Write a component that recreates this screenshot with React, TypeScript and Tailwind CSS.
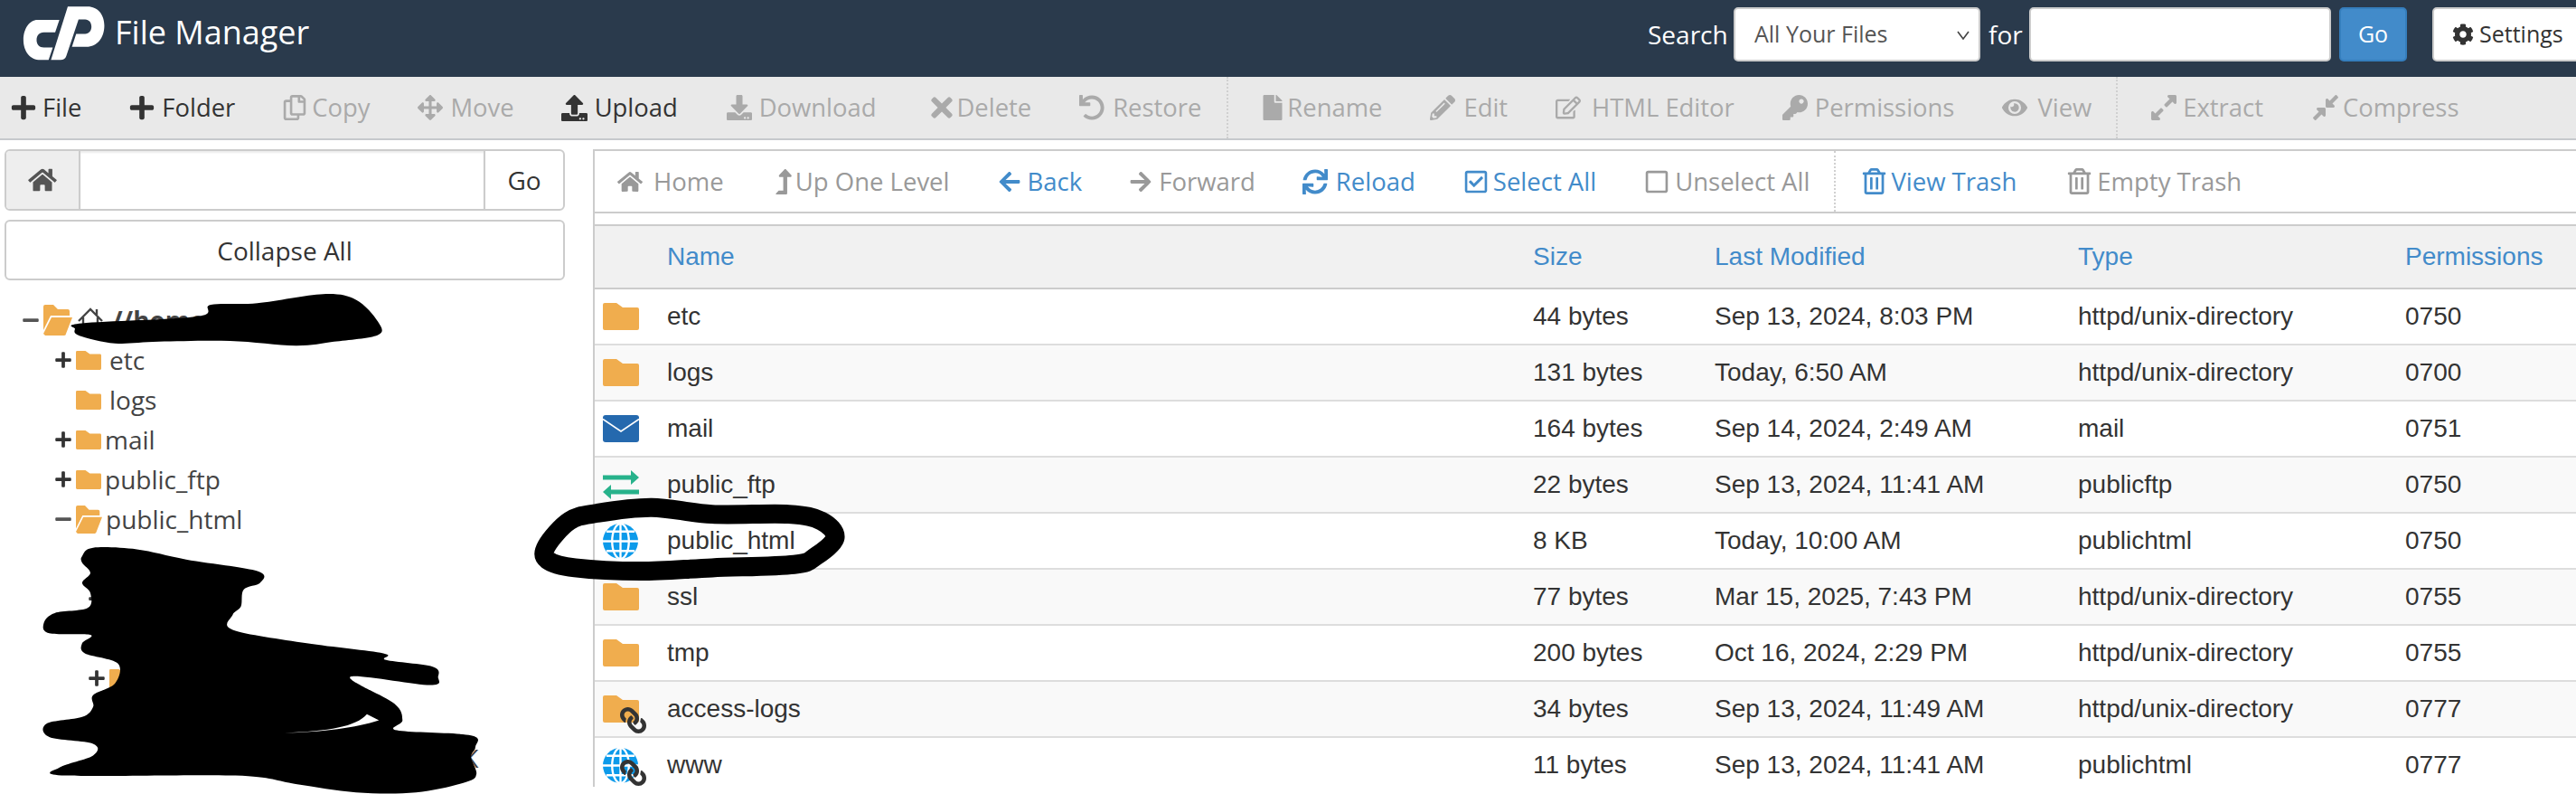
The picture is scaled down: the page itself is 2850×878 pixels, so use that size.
import React from "react";
import {
  FaRegCopy, FaArrowsAlt, FaUpload, FaDownload, FaTimes, FaUndo, FaFile, FaPencilAlt, FaRegEdit, FaKey, FaEye,
  FaExpandAlt, FaCompressAlt, FaHome, FaLevelUpAlt, FaArrowLeft, FaArrowRight, FaSync, FaRegCheckSquare, FaRegSquare,
  FaRegTrashAlt, FaCog, FaLink, FaPlus, FaMinus,
} from "react-icons/fa";

const smooth = (p: number[][]) => {
  const n = p.length;
  let d = `M${p[0][0]} ${p[0][1]}`;
  for (let i = 0; i < n; i++) {
    const a = p[(i - 1 + n) % n], b = p[i], c = p[(i + 1) % n], e = p[(i + 2) % n];
    d += ` C${b[0] + (c[0] - a[0]) / 6} ${b[1] + (c[1] - a[1]) / 6} ${c[0] - (e[0] - b[0]) / 6} ${c[1] - (e[1] - b[1]) / 6} ${c[0]} ${c[1]}`;
  }
  return d + "Z";
};

const blobTop = [[137,172],[150,155],[360,135],[385,100],[470,95],[590,68],[650,85],[690,150],[690,190],[610,210],[540,222],[420,208],[290,210],[210,215],[145,192]];
const blobLow = [[150,850],[170,825],[250,830],[340,860],[470,895],[475,930],[445,950],[440,1000],[425,1025],[425,1070],[560,1110],[700,1140],[705,1160],[790,1180],[800,1210],[785,1235],[640,1210],[720,1290],[735,1340],[725,1370],[860,1385],[868,1420],[860,1450],[870,1500],[850,1525],[760,1555],[650,1555],[540,1530],[430,1505],[120,1505],[110,1480],[170,1445],[170,1410],[90,1390],[85,1350],[150,1330],[170,1300],[170,1265],[210,1230],[215,1170],[155,1140],[150,1110],[165,1085],[90,1080],[80,1050],[100,1020],[160,1005],[165,960],[150,930],[165,900],[150,870]];
const loop = [[998,820],[1040,745],[1090,722],[1190,705],[1300,725],[1440,725],[1500,745],[1525,795],[1490,850],[1450,875],[1300,885],[1170,895],[1050,885],[1000,862]];

const Scribbles = () => (
  <svg viewBox="0 0 1568 1560" preserveAspectRatio="none" className="absolute left-0 top-[300px] w-[950px] h-[578px] pointer-events-none">
    <path d={smooth(blobTop)} fill="#000" />
    <path d={smooth(blobLow)} fill="#000" />
    <path d="M520 1378 C600 1372 650 1360 670 1322 L692 1340 C650 1362 590 1375 520 1378Z" fill="#fff" />
    <path d={smooth(loop)} fill="none" stroke="#000" strokeWidth="21" vectorEffect="non-scaling-stroke" />
  </svg>
);

const Logo = () => (
  <svg viewBox="70 15 285 190" className="w-[95px] h-[63px]" fill="#fff">
    <path d="M125 66 L198 66 L184 108 L146 108 C130 108 122 120 122 133 C122 147 131 158 146 158 L176 158 L162 200 L135 200 C100 200 78 170 78 133 C78 96 98 66 125 66Z" />
    <path d="M226 22 L292 22 C327 22 348 50 348 85 C348 125 325 156 288 156 L240 156 L254 113 L284 113 C297 113 305 102 305 89 C305 76 297 65 284 65 L262 65 L221 187 C218 196 211 200 202 200 L170 200Z" />
  </svg>
);

const Folder = ({ className }: { className: string }) => (
  <svg viewBox="0 0 40 30" className={className} fill="#f0ad4e">
    <path d="M2 0H15L22 5H38a2 2 0 0 1 2 2V28a2 2 0 0 1-2 2H2a2 2 0 0 1-2-2V2a2 2 0 0 1 2-2Z" />
  </svg>
);
const FolderOpen = ({ className }: { className: string }) => (
  <svg viewBox="0 0 32 34" className={className} fill="#f0ad4e">
    <path d="M0 2a2 2 0 0 1 2-2H11L16 5H27a2 2 0 0 1 2 2V12H8L0 28Z" />
    <path d="M9 14H32L25 32a2 2 0 0 1-2 2H2L0 32Z" />
  </svg>
);
const Mail = () => (
  <svg viewBox="0 0 40 30" className="w-[40px] h-[30px]">
    <rect width="40" height="30" rx="3" fill="#2569ae" />
    <path d="M0 4.5L20 18L40 4.5" fill="none" stroke="#fff" strokeWidth="1.6" />
  </svg>
);
const Ftp = () => (
  <svg viewBox="0 0 40 32" className="w-[40px] h-[32px]" fill="#27b28b">
    <path d="M0 5.5H31V0L40 8L31 16V10.5H0Z" />
    <path d="M40 21.5H9V16L0 24L9 32V26.5H40Z" />
  </svg>
);
const Globe = () => (
  <svg viewBox="0 0 40 40" className="w-[39px] h-[39px]">
    <circle cx="20" cy="20" r="20" fill="#0c9aea" />
    <g fill="none" stroke="#fff" strokeWidth="2.4">
      <ellipse cx="20" cy="20" rx="9.5" ry="20" />
      <path d="M20 0V40M0 20H40M4 9H36M4 31H36" />
    </g>
  </svg>
);
const HomeOutline = () => (
  <svg viewBox="0 0 30 30" className="w-[30px] h-[30px] shrink-0" fill="none" stroke="#444" strokeWidth="2.4">
    <path d="M2 16L15 3L28 16M7 12V28H23V12M22 9V3" />
  </svg>
);

type Tool = { label: string; Icon: any; slot: string; ml: string; icon?: string };

const Item = ({ t, tone }: { t: Tool; tone: string }) => (
  <div className={`flex items-center shrink-0 ${t.ml} ${tone}`}>
    <span className={`flex items-center ${t.slot}`}>
      <t.Icon className={`${t.icon ?? "h-[28px]"} w-auto`} />
    </span>
    <span className="whitespace-nowrap">{t.label}</span>
  </div>
);

const Sep = ({ ml }: { ml: string }) => (
  <div className={`self-stretch border-l-2 border-dotted border-[#d0d0d0] shrink-0 ${ml}`} />
);

const mainTools: (Tool & { on?: boolean })[] = [
  { label: "File", Icon: FaPlus, slot: "w-[36px]", ml: "ml-[11px]", on: true, icon: "h-[30px]" },
  { label: "Folder", Icon: FaPlus, slot: "w-[37px]", ml: "ml-[52px]", on: true, icon: "h-[30px]" },
  { label: "Copy", Icon: FaRegCopy, slot: "w-[33px]", ml: "ml-[52px]" },
  { label: "Move", Icon: FaArrowsAlt, slot: "w-[36px]", ml: "ml-[53px]" },
  { label: "Upload", Icon: FaUpload, slot: "w-[37px]", ml: "ml-[52px]", on: true, icon: "h-[29px]" },
  { label: "Download", Icon: FaDownload, slot: "w-[36px]", ml: "ml-[54px]" },
  { label: "Delete", Icon: FaTimes, slot: "w-[34px]", ml: "ml-[55px]", icon: "h-[34px]" },
  { label: "Restore", Icon: FaUndo, slot: "w-[37px]", ml: "ml-[53px]" },
];
const midTools: Tool[] = [
  { label: "Rename", Icon: FaFile, slot: "w-[30px]", ml: "ml-[35px]" },
  { label: "Edit", Icon: FaPencilAlt, slot: "w-[37px]", ml: "ml-[53px]" },
  { label: "HTML Editor", Icon: FaRegEdit, slot: "w-[40px]", ml: "ml-[53px]" },
  { label: "Permissions", Icon: FaKey, slot: "w-[36px]", ml: "ml-[53px]" },
  { label: "View", Icon: FaEye, slot: "w-[39px]", ml: "ml-[53px]" },
];
const endTools: Tool[] = [
  { label: "Extract", Icon: FaExpandAlt, slot: "w-[37px]", ml: "ml-[35px]", icon: "h-[32px]" },
  { label: "Compress", Icon: FaCompressAlt, slot: "w-[35px]", ml: "ml-[53px]", icon: "h-[32px]" },
];

const GRAY = "text-[#999]";
const BLUE = "text-[#428bca]";
const navTools: (Tool & { tone: string })[] = [
  { label: "Home", Icon: FaHome, slot: "w-[40px]", ml: "ml-[25px]", tone: GRAY, icon: "h-[28px]" },
  { label: "Up One Level", Icon: FaLevelUpAlt, slot: "w-[26px]", ml: "ml-[53px]", tone: GRAY, icon: "h-[28px]" },
  { label: "Back", Icon: FaArrowLeft, slot: "w-[33px]", ml: "ml-[53px]", tone: BLUE, icon: "h-[26px]" },
  { label: "Forward", Icon: FaArrowRight, slot: "w-[33px]", ml: "ml-[52px]", tone: GRAY, icon: "h-[26px]" },
  { label: "Reload", Icon: FaSync, slot: "w-[37px]", ml: "ml-[52px]", tone: BLUE },
  { label: "Select All", Icon: FaRegCheckSquare, slot: "w-[33px]", ml: "ml-[53px]", tone: BLUE },
  { label: "Unselect All", Icon: FaRegSquare, slot: "w-[34px]", ml: "ml-[53px]", tone: GRAY },
];
const navEnd: (Tool & { tone: string })[] = [
  { label: "View Trash", Icon: FaRegTrashAlt, slot: "w-[33px]", ml: "ml-[28px]", tone: BLUE, icon: "h-[29px]" },
  { label: "Empty Trash", Icon: FaRegTrashAlt, slot: "w-[34px]", ml: "ml-[55px]", tone: GRAY, icon: "h-[29px]" },
];

const cols = "grid grid-cols-[80px_958px_201px_402px_362px_1fr] items-center";
const rows = [
  { k: "folder", n: "etc", s: "44 bytes", d: "Sep 13, 2024, 8:03 PM", t: "httpd/unix-directory", p: "0750" },
  { k: "folder", n: "logs", s: "131 bytes", d: "Today, 6:50 AM", t: "httpd/unix-directory", p: "0700" },
  { k: "mail", n: "mail", s: "164 bytes", d: "Sep 14, 2024, 2:49 AM", t: "mail", p: "0751" },
  { k: "ftp", n: "public_ftp", s: "22 bytes", d: "Sep 13, 2024, 11:41 AM", t: "publicftp", p: "0750" },
  { k: "globe", n: "public_html", s: "8 KB", d: "Today, 10:00 AM", t: "publichtml", p: "0750" },
  { k: "folder", n: "ssl", s: "77 bytes", d: "Mar 15, 2025, 7:43 PM", t: "httpd/unix-directory", p: "0755" },
  { k: "folder", n: "tmp", s: "200 bytes", d: "Oct 16, 2024, 2:29 PM", t: "httpd/unix-directory", p: "0755" },
  { k: "folderlink", n: "access-logs", s: "34 bytes", d: "Sep 13, 2024, 11:49 AM", t: "httpd/unix-directory", p: "0777" },
  { k: "globelink", n: "www", s: "11 bytes", d: "Sep 13, 2024, 11:41 AM", t: "publichtml", p: "0777" },
];

const RowIcon = ({ k }: { k: string }) => {
  const link = k.endsWith("link");
  return (
    <div className="relative w-[40px] flex items-center justify-start">
      {k.startsWith("folder") && <Folder className="w-[40px] h-[30px]" />}
      {k === "mail" && <Mail />}
      {k === "ftp" && <Ftp />}
      {k.startsWith("globe") && <Globe />}
      {link && <FaLink className="absolute left-[19px] top-[13px] w-[29px] h-[29px] -scale-x-100 text-[#333]" />}
    </div>
  );
};

const TreeRow = ({ toggle, open, label, pad, tx }: { toggle?: "+" | "-"; open?: boolean; label?: string; pad: string; tx: string }) => (
  <div className={`h-[44px] flex items-center text-[#444] ${pad}`}>
    <span className="w-[24px] flex items-center shrink-0">
      {toggle === "+" && <FaPlus className="w-[20px] h-[20px] text-[#333]" />}
      {toggle === "-" && <FaMinus className="w-[20px] h-[20px] text-[#555]" />}
    </span>
    {open ? <FolderOpen className="w-[29px] h-[33px] shrink-0" /> : <Folder className="w-[28px] h-[21px] shrink-0" />}
    {label && <span className={`whitespace-nowrap ${tx}`}>{label}</span>}
  </div>
);

export default function App() {
  return (
    <div className="relative w-[2850px] h-[878px] overflow-hidden bg-white text-[#333] text-[28px] font-['Open_Sans',sans-serif]">
      <header className="h-[85px] bg-[#2a3a4c] flex items-center text-white">
        <div className="ml-[23px] mt-[-12px]"><Logo /></div>
        <h1 className="ml-[9px] mt-[-14px] text-[36px] font-normal whitespace-nowrap">File Manager</h1>
        <div className="ml-auto flex items-center mt-[-10px] mr-[-61px] shrink-0 w-[1088px]">
          <span className="w-[95px] shrink-0">Search</span>
          <div className="relative shrink-0">
            <select className="appearance-none w-[273px] h-[60px] bg-white rounded-[5px] border-2 border-[#ccc] pl-[21px] text-[#555] text-[25px]">
              <option>All Your Files</option>
            </select>
            <svg viewBox="0 0 14 10" className="absolute right-[12px] top-[26px] w-[14px] h-[10px]" fill="none" stroke="#444" strokeWidth="1.6">
              <path d="M1 1L7 9L13 1" />
            </svg>
          </div>
          <span className="ml-[9px] w-[45px] shrink-0">for</span>
          <div className="w-[334px] h-[60px] bg-white rounded-[5px] border-2 border-[#ccc] shrink-0" />
          <button className="ml-[9px] w-[75px] h-[60px] bg-[#428bca] border-2 border-[#357ebd] rounded-[5px] text-white text-[25px] shrink-0">Go</button>
          <button className="ml-[28px] w-[220px] h-[60px] bg-white rounded-[5px] border-2 border-[#ccc] text-[#333] text-[25px] flex items-center pl-[20px] shrink-0">
            <FaCog className="w-[24px] h-[24px] mr-[6px]" />Settings
          </button>
        </div>
      </header>

      <div className="h-[70px] bg-[#e9e9e9] border-b-2 border-[#c6c9cc] flex items-center text-[27.4px] leading-[72px]">
        {mainTools.map((t) => <Item key={t.label} t={t} tone={t.on ? "text-[#333]" : "text-[#aaa]"} />)}
        <Sep ml="ml-[28px]" />
        {midTools.map((t) => <Item key={t.label} t={t} tone="text-[#aaa]" />)}
        <Sep ml="ml-[27px]" />
        {endTools.map((t) => <Item key={t.label} t={t} tone="text-[#aaa]" />)}
      </div>

      <div className="flex pt-[10px]">
        <aside className="ml-[5px] w-[620px] shrink-0">
          <div className="h-[68px] flex border-2 border-[#ccc] rounded-[6px] overflow-hidden">
            <div className="w-[82px] bg-[#eee] border-r-2 border-[#ccc] flex items-center justify-center">
              <FaHome className="w-[32px] h-[28px] text-[#555]" />
            </div>
            <div className="flex-1 shadow-[inset_0_2px_2px_rgba(0,0,0,0.08)]" />
            <div className="w-[88px] border-l-2 border-[#ccc] flex items-center justify-center">Go</div>
          </div>
          <div className="mt-[10px] h-[67px] border-2 border-[#ccc] rounded-[6px] flex items-center justify-center">Collapse All</div>
          <div className="pt-[22px]">
            <div className="h-[44px] flex items-center text-[#444] pl-[19px]">
              <span className="w-[24px] flex items-center shrink-0"><FaMinus className="w-[20px] h-[20px] text-[#555]" /></span>
              <FolderOpen className="w-[32px] h-[34px] shrink-0" />
              <span className="ml-[5px]"><HomeOutline /></span>
              <span className="ml-[9px] font-bold whitespace-nowrap">//home</span>
            </div>
            <TreeRow toggle="+" pad="pl-[55px]" tx="ml-[9px]" label="etc" />
            <TreeRow pad="pl-[55px]" tx="ml-[9px]" label="logs" />
            <TreeRow toggle="+" pad="pl-[55px]" tx="ml-[4px]" label="mail" />
            <TreeRow toggle="+" pad="pl-[55px]" tx="ml-[4px]" label="public_ftp" />
            <TreeRow toggle="-" open pad="pl-[55px]" tx="ml-[4px]" label="public_html" />
            <div className="h-[44px]" />
            <TreeRow toggle="+" pad="pl-[92px]" tx="ml-[4px]" />
            <div className="h-[44px]" />
            <TreeRow toggle="+" pad="pl-[92px]" tx="ml-[4px]" />
            <div className="h-[44px]" />
            <div className="h-[44px] flex items-center pl-[490px] text-[#444]">pK</div>
          </div>
        </aside>

        <main className="ml-[31px] flex-1 h-[705px] overflow-hidden border-l-2 border-[#ccc]">
          <div className="h-[71px] border-y-2 border-[#ccc] flex items-center text-[27.5px] leading-[72px]">
            {navTools.map((t) => <Item key={t.label} t={t} tone={t.tone} />)}
            <Sep ml="ml-[27px]" />
            {navEnd.map((t) => <Item key={t.label} t={t} tone={t.tone} />)}
          </div>
          <div className="mt-[12px] font-['Liberation_Sans',sans-serif]">
            <div className={`${cols} h-[72px] bg-[#f1f1f1] border-y-2 border-[#ccc] text-[#428bca]`}>
              <span />
              <span>Name</span><span>Size</span><span>Last Modified</span><span>Type</span><span>Permissions</span>
            </div>
            {rows.map((r, i) => (
              <div key={r.n} className={`${cols} h-[62px] border-b-2 border-[#ddd] ${i % 2 ? "bg-[#f9f9f9]" : "bg-white"}`}>
                <div className="pl-[9px]"><RowIcon k={r.k} /></div>
                <span>{r.n}</span><span>{r.s}</span><span>{r.d}</span><span>{r.t}</span><span>{r.p}</span>
              </div>
            ))}
          </div>
        </main>
      </div>
      <Scribbles />
    </div>
  );
}
